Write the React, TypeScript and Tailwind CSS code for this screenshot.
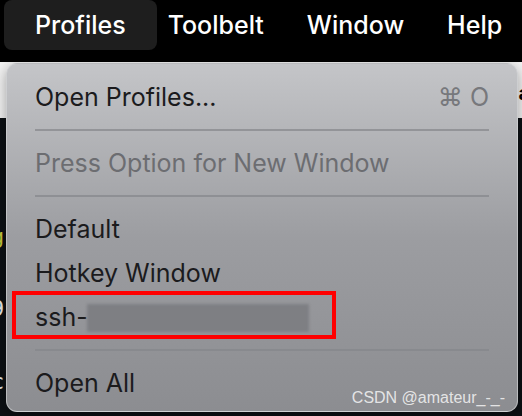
import React from "react";

const font = { fontFamily: "Inter, 'Noto Sans', sans-serif" };

function Sep() {
  return (
    <div className="h-[22px] flex items-center px-[28px]">
      <div className="h-[2px] w-full bg-[#85868a]/70" />
    </div>
  );
}

function Item({ label, dim, shortcut }: { label: string; dim?: boolean; shortcut?: string }) {
  return (
    <div className="h-[44px] flex items-center justify-between pl-[28px] pr-[28px]">
      <span className={dim ? "text-[#6c6d71]" : "text-[#1b1b1d]"}>{label}</span>
      {shortcut && <span className="text-[#77787c]">{shortcut}</span>}
    </div>
  );
}

export default function App() {
  return (
    <div className="w-[522px] h-[416px] overflow-hidden bg-black text-[25px] leading-none" style={font}>
      {/* menu bar */}
      <div className="h-[62px] flex items-start pl-[4px] text-white font-medium">
        <div className="h-[50px] px-[31px] flex items-center rounded-[8px] bg-[#1e1e1e]">Profiles</div>
        <div className="h-[50px] flex items-center gap-[43px] ml-[11px]">
          <span>Toolbelt</span>
          <span>Window</span>
          <span>Help</span>
        </div>
      </div>

      {/* content under the menu */}
      <div className="relative h-[354px]">
        <div className="h-[56px] bg-[#f2f2f2]">
          <div className="flex justify-end pt-[21px] text-[20px] font-bold text-black">
            <span className="-mr-[8px]">a</span>
          </div>
        </div>
        <div className="h-[298px] bg-[#0c1014] relative text-[22px]" style={{ fontFamily: "'DejaVu Sans Mono', monospace" }}>
          <span className="absolute left-[-9px] top-[108px] text-[#c8c83a]">g</span>
          <span className="absolute left-[-9px] top-[180px] text-[#e8e8e8]">9</span>
          <span className="absolute left-[-9px] top-[253px] text-[#e8e8e8]">c</span>
        </div>

        {/* dropdown */}
        <div className="absolute left-[6px] top-[1px] w-[512px] h-[349px] rounded-[11px] border border-[#d7d8db]/60 shadow-[0_4px_14px_rgba(0,0,0,0.35)] bg-gradient-to-b from-[#c4c5c8] via-[#9c9da1] to-[#8c8d91] pt-[11px] overflow-hidden">
          <Item label="Open Profiles..." shortcut="⌘ O" />
          <Sep />
          <Item label="Press Option for New Window" dim />
          <Sep />
          <Item label="Default" />
          <Item label="Hotkey Window" />
          <div className="relative h-[44px] flex items-center pl-[28px] text-[#1b1b1d]">
            <span>ssh-</span>
            <div className="absolute left-[80px] top-[9px] w-[222px] h-[28px] bg-[#7e7f83] blur-[1.5px]" />
            <div className="absolute left-[5px] top-[-4px] w-[324px] h-[48px] border-[4px] border-[#ff0000]" />
          </div>
          <Sep />
          <Item label="Open All" />
          <div className="absolute right-[12px] bottom-[5px] text-[16px] text-[#f0f0f0]/90" style={{ fontFamily: "'Liberation Sans', Arial, sans-serif" }}>
            CSDN @amateur_-_-
          </div>
        </div>
      </div>
    </div>
  );
}
